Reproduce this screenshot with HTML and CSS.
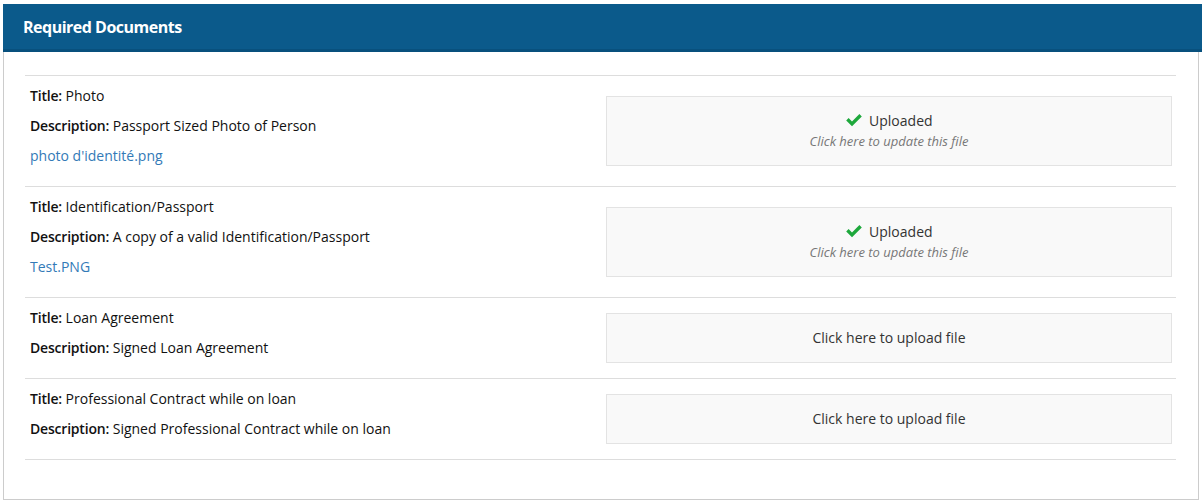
FILE: index.html
```html
<!DOCTYPE html>
<html lang="en">
  <head>
    <meta charset="UTF-8" />
    <meta name="viewport" content="width=device-width, initial-scale=1.0" />
    <title>Required Documents</title>
    <link rel="stylesheet" href="styles.css">
  </head>
  <body>
    <div class="panel">
      <div class="panel-heading">Required Documents</div>
      <div class="panel-body">
        <div class="doc-row">
          <div class="doc-info">
            <p><b>Title:</b> Photo</p>
            <p><b>Description:</b> Passport Sized Photo of Person</p>
            <p><a href="#">photo d'identité.png</a></p>
          </div>
          <div class="upload-box">
            <div class="upload-status">
              <svg class="check" viewBox="0 0 18 14" width="18" height="14"><path d="M1.2 7.4 L3.6 5 L7 8.4 L14.4 1 L16.8 3.4 L7 13.2 Z" /></svg>
              Uploaded
            </div>
            <div class="upload-hint">Click here to update this file</div>
          </div>
        </div>
        <div class="doc-row">
          <div class="doc-info">
            <p><b>Title:</b> Identification/Passport</p>
            <p><b>Description:</b> A copy of a valid Identification/Passport</p>
            <p><a href="#">Test.PNG</a></p>
          </div>
          <div class="upload-box">
            <div class="upload-status">
              <svg class="check" viewBox="0 0 18 14" width="18" height="14"><path d="M1.2 7.4 L3.6 5 L7 8.4 L14.4 1 L16.8 3.4 L7 13.2 Z" /></svg>
              Uploaded
            </div>
            <div class="upload-hint">Click here to update this file</div>
          </div>
        </div>
        <div class="doc-row">
          <div class="doc-info">
            <p><b>Title:</b> Loan Agreement</p>
            <p><b>Description:</b> Signed Loan Agreement</p>
          </div>
          <div class="upload-box">Click here to upload file</div>
        </div>
        <div class="doc-row">
          <div class="doc-info">
            <p><b>Title:</b> Professional Contract while on loan</p>
            <p><b>Description:</b> Signed Professional Contract while on loan</p>
          </div>
          <div class="upload-box">Click here to upload file</div>
        </div>
      </div>
    </div>
  </body>
</html>
```

FILE: styles.css
```css
body {
  font-family: "Open Sans", "Noto Sans", sans-serif;
  font-size: 14px;
  line-height: 20px;
  color: #111;
  margin: 4px 0 0 3px;
}
.panel {
  border: 1px solid #ccc;
  border-top: none;
  height: 496px;
  box-sizing: border-box;
  margin-right: 3px;
}
.panel-heading {
  background-color: #0b5a8b;
  border-bottom: 3px solid #08507d;
  color: #fff;
  font-weight: bold;
  font-size: 16px;
  height: 45px;
  line-height: 46px;
  padding-left: 20px;
  margin: 0 -4px 0 -1px;
  letter-spacing: -0.5px;
}
.panel-body {
  padding: 23px 22px 0 21px;
}
.doc-row {
  border-top: 1px solid #ddd;
  padding: 10px 4px 10px 5px;
  display: grid;
  grid-template-columns: 1fr 566px;
  align-items: center;
}
.doc-row:last-child {
  border-bottom: 1px solid #ddd;
}
.doc-info p {
  margin: 0 0 10px;
}
.doc-info b {
  font-weight: 600;
  letter-spacing: -0.2px;
}
a {
  color: #337ab7;
  text-decoration: none;
}
.upload-box {
  background-color: #f9f9f9;
  border: 1px solid #e3e3e3;
  padding: 14px;
  text-align: center;
  color: #333;
}
.upload-status {
  font-size: 14px;
}
.check {
  fill: #1ea83c;
  vertical-align: -1px;
  margin-right: 2px;
}
.upload-hint {
  font-size: 13px;
  font-style: italic;
  color: #777;
  line-height: 20px;
}
```
